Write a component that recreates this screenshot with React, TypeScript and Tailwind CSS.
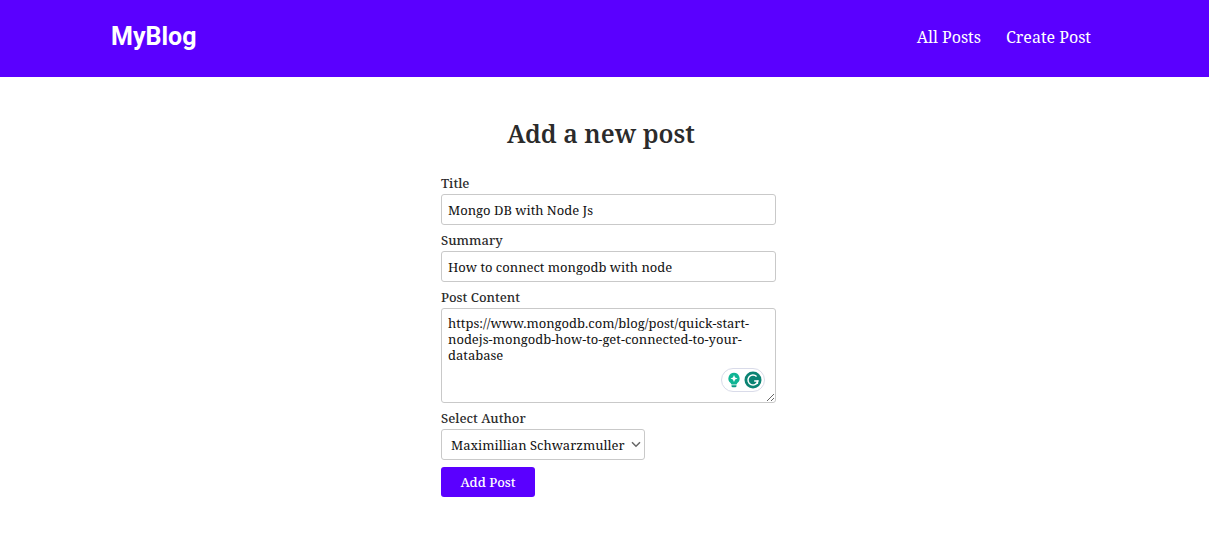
import type { ReactNode } from "react";

const control =
  "rounded-[3px] border border-[#c9c9c9] bg-white text-[13px] leading-4 text-[#111111]";

function Field({ id, label, children }: { id: string; label: string; children: ReactNode }) {
  return (
    <div className="flex flex-col items-start gap-[3px]">
      <label htmlFor={id} className="text-[13px] leading-4 font-medium">
        {label}
      </label>
      {children}
    </div>
  );
}

function WritingAssistant() {
  return (
    <div className="absolute right-[11px] bottom-[11px] flex h-6 w-11 items-center justify-between rounded-full border border-[#d9dbe9] bg-white pr-[2px] pl-[5px]">
      <svg width="14" height="16" viewBox="0 0 14 16" aria-hidden="true">
        <path d="M7 .8a5.700 5.700 0 0 0-3.400 10.200l.9 1.600h5l.9-1.600A5.700 5.700 0 0 0 7 .8Z" fill="#0fb594" />
        <path d="M4.500 13.200h5v.8a1.300 1.300 0 0 1-1.300 1.300H5.800a1.300 1.300 0 0 1-1.300-1.300Z" fill="#0a9a83" />
        <path d="M7 3 8.100 5.400l2.500 1.100-2.500 1.100L7 10 5.900 7.600 3.400 6.500 5.900 5.400Z" fill="#fff" />
      </svg>
      <svg width="18" height="18" viewBox="0 0 18 18" aria-hidden="true">
        <circle cx="9" cy="9" r="8.500" fill="#0b8373" />
        <path d="M12.600 5.500A5 5 0 1 0 13.900 10H10.200" fill="none" stroke="#fff" strokeWidth="1.500" />
        <path d="M13.400 9.500v3.500" fill="none" stroke="#fff" strokeWidth="1.400" />
      </svg>
    </div>
  );
}

export default function App() {
  return (
    <div className="min-h-screen bg-white font-['Roboto_Slab','Noto_Serif','DejaVu_Serif',serif] text-[#2b2b2b]">
      <header className="bg-[#5a00ff] pr-[7px] text-white">
        <div className="mx-auto flex h-[77px] max-w-[980px] items-center justify-between pb-[3px]">
          <a href="#" className="font-['Roboto',sans-serif] text-[25px] leading-8 font-bold">
            MyBlog
          </a>
          <nav className="flex gap-[25px] text-base">
            <a href="#posts">All Posts</a>
            <a href="#new">Create Post</a>
          </nav>
        </div>
      </header>
      <main className="pt-10 pr-[7px] pb-10">
        <h1 className="text-center text-[25px] leading-8 font-semibold">Add a new post</h1>
        <form className="mx-auto mt-[26px] flex max-w-[350px] flex-col gap-[7px] pl-[15px]" onSubmit={(e) => e.preventDefault()}>
          <Field id="title" label="Title">
            <input id="title" defaultValue="Mongo DB with Node Js" className={`${control} h-[31px] w-full px-[6px]`} />
          </Field>
          <Field id="summary" label="Summary">
            <input id="summary" defaultValue="How to connect mongodb with node" className={`${control} h-[31px] w-full px-[6px]`} />
          </Field>
          <Field id="content" label="Post Content">
            <div className="relative w-full">
              <textarea
                id="content"
                spellCheck={false}
                defaultValue="https://www.mongodb.com/blog/post/quick-start-nodejs-mongodb-how-to-get-connected-to-your-database"
                className={`${control} block h-[95px] w-full px-[6px] py-[6px]`}
              />
              <WritingAssistant />
            </div>
          </Field>
          <Field id="author" label="Select Author">
            <div className="relative">
              <select id="author" className={`${control} block h-[31px] w-[204px] appearance-none pl-[9px]`}>
                <option>Maximillian Schwarzmuller</option>
              </select>
              <svg className="pointer-events-none absolute top-3 right-1" width="10" height="7" viewBox="0 0 10 7" aria-hidden="true">
                <path d="M1 1.300 5 5.200 9 1.300" fill="none" stroke="#666" strokeWidth="1.500" />
              </svg>
            </div>
          </Field>
          <button type="submit" className="h-[30px] w-[94px] rounded-[3px] bg-[#5a00ff] text-[13px] leading-4 font-medium text-white">
            Add Post
          </button>
        </form>
      </main>
    </div>
  );
}
